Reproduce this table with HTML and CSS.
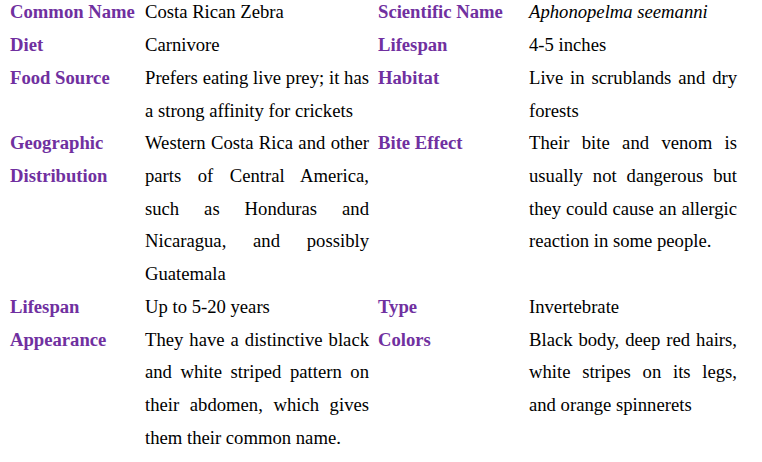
FILE: index.html
```html
<!DOCTYPE html>
<html lang="en">
<head>
<meta charset="utf-8">
<title>Costa Rican Zebra Tarantula</title>
<link rel="stylesheet" href="styles.css">
</head>
<body>
<table class="facts">
  <colgroup>
    <col class="c-label1">
    <col class="c-value1">
    <col class="c-label2">
    <col class="c-value2">
  </colgroup>
  <tbody>
    <tr>
      <th>Common Name</th>
      <td class="v1">Costa Rican Zebra</td>
      <th>Scientific Name</th>
      <td class="v2"><em>Aphonopelma seemanni</em></td>
    </tr>
    <tr>
      <th>Diet</th>
      <td class="v1">Carnivore</td>
      <th>Lifespan</th>
      <td class="v2">4-5 inches</td>
    </tr>
    <tr>
      <th>Food Source</th>
      <td class="v1">Prefers eating live prey; it has a strong affinity for crickets</td>
      <th>Habitat</th>
      <td class="v2">Live in scrublands and dry forests</td>
    </tr>
    <tr>
      <th>Geographic Distribution</th>
      <td class="v1">Western Costa Rica and other parts of Central America, such as Honduras and Nicaragua, and possibly Guatemala</td>
      <th>Bite Effect</th>
      <td class="v2">Their bite and venom is usually not dangerous but they could cause an allergic reaction in some people.</td>
    </tr>
    <tr>
      <th>Lifespan</th>
      <td class="v1">Up to 5-20 years</td>
      <th>Type</th>
      <td class="v2">Invertebrate</td>
    </tr>
    <tr>
      <th>Appearance</th>
      <td class="v1">They have a distinctive black and white striped pattern on their abdomen, which gives them their common name.</td>
      <th>Colors</th>
      <td class="v2">Black body, deep red hairs, white stripes on its legs, and orange spinnerets</td>
    </tr>
  </tbody>
</table>
</body>
</html>
```

FILE: styles.css
```css
html, body {
  margin: 0;
  padding: 0;
  background: #ffffff;
}

body {
  font-family: "Liberation Serif", "Times New Roman", serif;
  font-size: 18.67px;
  line-height: 32.72px;
  color: #000000;
}

.facts {
  table-layout: fixed;
  border-collapse: collapse;
  border-spacing: 0;
  width: 737px;
  margin: -3.66px 0 0 5px;
}

.c-label1 { width: 135px; }
.c-value1 { width: 233px; }
.c-label2 { width: 151px; }
.c-value2 { width: 218px; }

.facts th,
.facts td {
  padding: 0 5px;
  vertical-align: top;
}

.facts th {
  font-weight: bold;
  color: #7030a0;
  text-align: left;
}

.facts td {
  text-align: justify;
}

.facts td.v1 {
  padding-right: 4px;
}

.facts em {
  font-style: italic;
}
```
